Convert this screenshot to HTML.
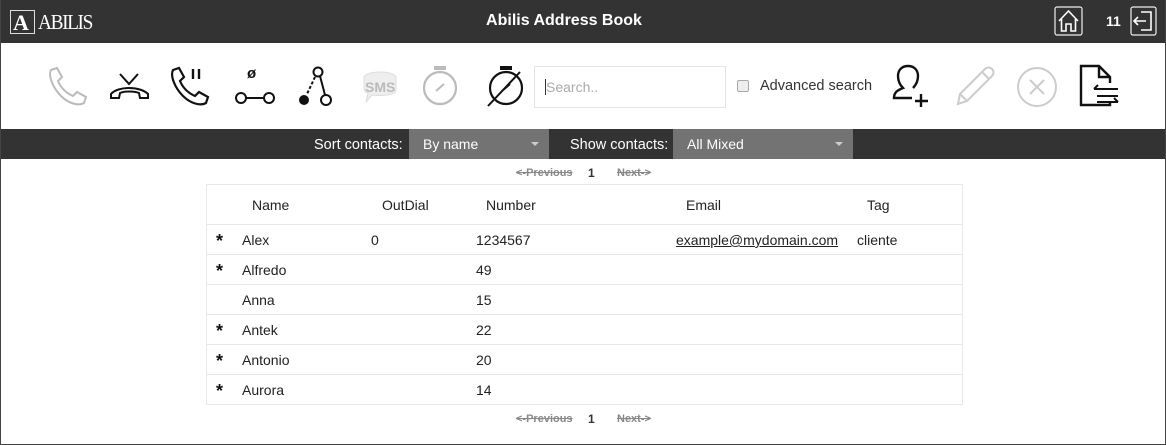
<!DOCTYPE html>
<html><head><meta charset="utf-8"><style>
*{margin:0;padding:0;box-sizing:border-box}
body{width:1166px;height:445px;overflow:hidden;background:#fff;font-family:"Liberation Sans",sans-serif;position:relative;color:#222}
.frame{position:absolute;left:0;top:0;width:1166px;height:445px;border:1px solid #444;border-top:none}
.hdr{position:absolute;left:0;top:0;width:1166px;height:43px;background:#333}
.abs{position:absolute}
.t{position:absolute;white-space:nowrap;font-size:14px}
.bar{position:absolute;left:0;top:129px;width:1166px;height:30px;background:#333}
.sel{position:absolute;top:129px;height:30px;background:#737373;color:#fff;font-size:14px;line-height:30px;padding-left:14px}
.sel:after{content:"";position:absolute;right:10px;top:13px;border:4px solid transparent;border-top:4px solid #ccc}
.pg{position:absolute;font-size:11px;color:#888;text-decoration:line-through;font-weight:bold}
.tbl{position:absolute;left:206px;top:184px;width:757px;height:221px;border:1px solid #e8e8e8}
.row{position:absolute;left:207px;width:755px;height:1px;background:#e6e6e6}
.star{position:absolute;left:216px;font-size:18px;font-weight:bold;color:#111}
</style></head><body>
<div class="hdr"></div>
<div class="abs" style="left:10px;top:10px;width:25px;height:24px;border:1px solid #ddd"></div>
<div class="t" style="left:13px;top:10px;font-family:'Liberation Serif',serif;font-size:22px;color:#fff;font-weight:bold">A</div>
<div class="t" style="left:38px;top:10px;font-family:'Liberation Serif',serif;font-size:21px;color:#fff;letter-spacing:-1.5px;transform:scaleX(0.92);transform-origin:left">ABILIS</div>
<div class="t" style="left:0;width:1128px;text-align:center;top:12px;font-size:16px;font-weight:bold;color:#fff">Abilis Address Book</div>
<svg class="abs" style="left:1054px;top:6px" width="29" height="30" viewBox="0 0 29 30"><rect x="1" y="1" width="27" height="28" rx="2" fill="none" stroke="#eee" stroke-width="1.2"/><path d="M5 15 L14.5 5 L24 15 M7.5 13 V25 H12 V18 H17 V25 H21.5 V13" fill="none" stroke="#fff" stroke-width="1.6"/></svg>
<div class="t" style="left:1106px;top:13px;color:#fff;font-weight:bold">11</div>
<svg class="abs" style="left:1130px;top:6px" width="27" height="30" viewBox="0 0 27 30"><rect x="1" y="1" width="25" height="28" rx="2" fill="none" stroke="#eee" stroke-width="1.2"/><path d="M11 6 H21 V24 H11 M4 15 H16 M8 11 L4 15 L8 19" fill="none" stroke="#fff" stroke-width="1.6"/></svg>

<svg class="abs" style="left:46px;top:66px" width="44" height="40" viewBox="0 0 44 40"><path d="M5 4 L11 2 L16 11 L12 15 C15 22 20 27 27 30 L31 26 L40 31 L38 37 C33 40 23 38 15 30 C7 22 2 10 5 4Z" fill="none" stroke="#bbb" stroke-width="2"/></svg>
<svg class="abs" style="left:108px;top:68px" width="44" height="36" viewBox="0 0 44 36"><path d="M12 6 L21 16 L30 6" fill="none" stroke="#111" stroke-width="2"/><path d="M3 30 L3 26 C10 18 32 18 40 26 L40 30 L32 30 L31 25 C26 23 17 23 12 25 L11 30Z" fill="none" stroke="#111" stroke-width="2"/></svg>
<svg class="abs" style="left:168px;top:66px" width="46" height="40" viewBox="0 0 46 40"><path d="M5 4 L11 2 L16 11 L12 15 C15 22 20 27 27 30 L31 26 L40 31 L38 37 C33 40 23 38 15 30 C7 22 2 10 5 4Z" fill="none" stroke="#111" stroke-width="2.2"/><path d="M25 3 V13 M31 3 V13" stroke="#111" stroke-width="2.4"/></svg>
<svg class="abs" style="left:232px;top:64px" width="46" height="44" viewBox="0 0 46 44"><text x="15" y="14" font-size="15" font-weight="bold" font-family="Liberation Sans" fill="#111">ø</text><circle cx="9" cy="34" r="5" fill="none" stroke="#111" stroke-width="2"/><circle cx="37" cy="34" r="5" fill="none" stroke="#111" stroke-width="2"/><path d="M14 34 H32" stroke="#111" stroke-width="2"/></svg>
<svg class="abs" style="left:294px;top:63px" width="46" height="46" viewBox="0 0 46 46"><circle cx="24" cy="9" r="4.5" fill="none" stroke="#111" stroke-width="2"/><circle cx="10" cy="37" r="5" fill="#111"/><circle cx="32" cy="37" r="5" fill="none" stroke="#111" stroke-width="2"/><path d="M26 13 L31 32" stroke="#111" stroke-width="2"/><path d="M21 14 L13 31" stroke="#111" stroke-width="2" stroke-dasharray="3 2"/></svg>
<svg class="abs" style="left:358px;top:68px" width="44" height="36" viewBox="0 0 44 36"><path d="M6 10 C6 2 38 2 38 10 V22 C38 28 20 28 14 27 L8 34 L10 25 C6 24 6 22 6 20Z" fill="#eee" stroke="#ddd"/><text x="7" y="24" font-size="14" font-weight="bold" font-family="Liberation Sans" fill="#bbb">SMS</text></svg>
<svg class="abs" style="left:418px;top:64px" width="44" height="44" viewBox="0 0 44 44"><rect x="16" y="2" width="12" height="4" fill="#bbb"/><circle cx="22" cy="24" r="16" fill="none" stroke="#bbb" stroke-width="2.2"/><path d="M18 27 L26 20" stroke="#bbb" stroke-width="2"/></svg>
<svg class="abs" style="left:484px;top:64px" width="44" height="44" viewBox="0 0 44 44"><rect x="16" y="2" width="12" height="4" fill="#111"/><circle cx="22" cy="24" r="16" fill="none" stroke="#111" stroke-width="2.2"/><path d="M18 27 L26 20 M4 42 L36 8" stroke="#111" stroke-width="2"/></svg>
<div class="abs" style="left:534px;top:66px;width:192px;height:42px;border:1px solid #e4e4e4"></div>
<div class="abs" style="left:545px;top:79px;width:1px;height:16px;background:#333"></div>
<div class="t" style="left:546px;top:79px;color:#aaa">Search..</div>
<div class="abs" style="left:737px;top:80px;width:12px;height:12px;border:1px solid #aaa;border-radius:2px;background:#eee"></div>
<div class="t" style="left:760px;top:78px;color:#333;font-size:14.5px">Advanced search</div>
<svg class="abs" style="left:890px;top:64px" width="46" height="46" viewBox="0 0 46 46"><path d="M22 34 H4 C4 28 8 26 13 24 C9 20 8 16 8 12 C8 5 13 2 18 2 C23 2 28 5 28 12 C28 16 27 20 23 24" fill="none" stroke="#111" stroke-width="2.4"/><path d="M31 30 V43 M25 37 H38" stroke="#111" stroke-width="2.4"/></svg>
<svg class="abs" style="left:952px;top:64px" width="46" height="44" viewBox="0 0 46 44"><path d="M6 40 L8 30 L33 5 C35 3 38 3 40 5 C42 7 42 10 40 12 L15 37Z M30 8 L37 15 M8 30 L15 37" fill="none" stroke="#ccc" stroke-width="2"/></svg>
<svg class="abs" style="left:1015px;top:65px" width="44" height="44" viewBox="0 0 44 44"><circle cx="22" cy="22" r="19" fill="none" stroke="#ccc" stroke-width="2"/><path d="M15 15 L29 29 M29 15 L15 29" stroke="#ccc" stroke-width="2"/></svg>
<svg class="abs" style="left:1078px;top:64px" width="44" height="46" viewBox="0 0 44 46"><path d="M32 19 V13 L21 2 H3 V41 H32 V39 M21 2 V13 H32" fill="none" stroke="#111" stroke-width="2.4"/><path d="M16 25 H40 M16 25 L20 21 M19 32 H40 M19 38 H40 M36 34 L40 38" fill="none" stroke="#111" stroke-width="2"/></svg>

<div class="bar"></div>
<div class="t" style="left:314px;top:137px;color:#fff;font-size:14.5px">Sort contacts:</div>
<div class="sel" style="left:409px;width:140px">By name</div>
<div class="t" style="left:570px;top:137px;color:#fff;font-size:14.5px">Show contacts:</div>
<div class="sel" style="left:673px;width:180px">All Mixed</div>

<div class="pg" style="left:516px;top:167px">&lt;-Previous</div>
<div class="t" style="left:588px;top:166px;font-size:12px;font-weight:bold;color:#333">1</div>
<div class="pg" style="left:617px;top:167px">Next-&gt;</div>

<div class="tbl"></div>
<div class="row" style="top:224px"></div><div class="row" style="top:254px"></div><div class="row" style="top:284px"></div><div class="row" style="top:314px"></div><div class="row" style="top:344px"></div><div class="row" style="top:374px"></div>
<div class="t" style="left:252px;top:197px">Name</div>
<div class="t" style="left:382px;top:197px">OutDial</div>
<div class="t" style="left:486px;top:197px">Number</div>
<div class="t" style="left:686px;top:197px">Email</div>
<div class="t" style="left:867px;top:197px">Tag</div>

<div class="star" style="top:231px">*</div><div class="t" style="left:242px;top:232px">Alex</div><div class="t" style="left:371px;top:232px">0</div><div class="t" style="left:476px;top:232px">1234567</div><div class="t" style="left:676px;top:232px;text-decoration:underline">example@mydomain.com</div><div class="t" style="left:857px;top:232px">cliente</div>
<div class="star" style="top:261px">*</div><div class="t" style="left:242px;top:262px">Alfredo</div><div class="t" style="left:476px;top:262px">49</div>
<div class="t" style="left:242px;top:292px">Anna</div><div class="t" style="left:476px;top:292px">15</div>
<div class="star" style="top:321px">*</div><div class="t" style="left:242px;top:322px">Antek</div><div class="t" style="left:476px;top:322px">22</div>
<div class="star" style="top:351px">*</div><div class="t" style="left:242px;top:352px">Antonio</div><div class="t" style="left:476px;top:352px">20</div>
<div class="star" style="top:381px">*</div><div class="t" style="left:242px;top:382px">Aurora</div><div class="t" style="left:476px;top:382px">14</div>

<div class="pg" style="left:516px;top:413px">&lt;-Previous</div>
<div class="t" style="left:588px;top:412px;font-size:12px;font-weight:bold;color:#333">1</div>
<div class="pg" style="left:617px;top:413px">Next-&gt;</div>
<div class="frame"></div>
</body></html>
